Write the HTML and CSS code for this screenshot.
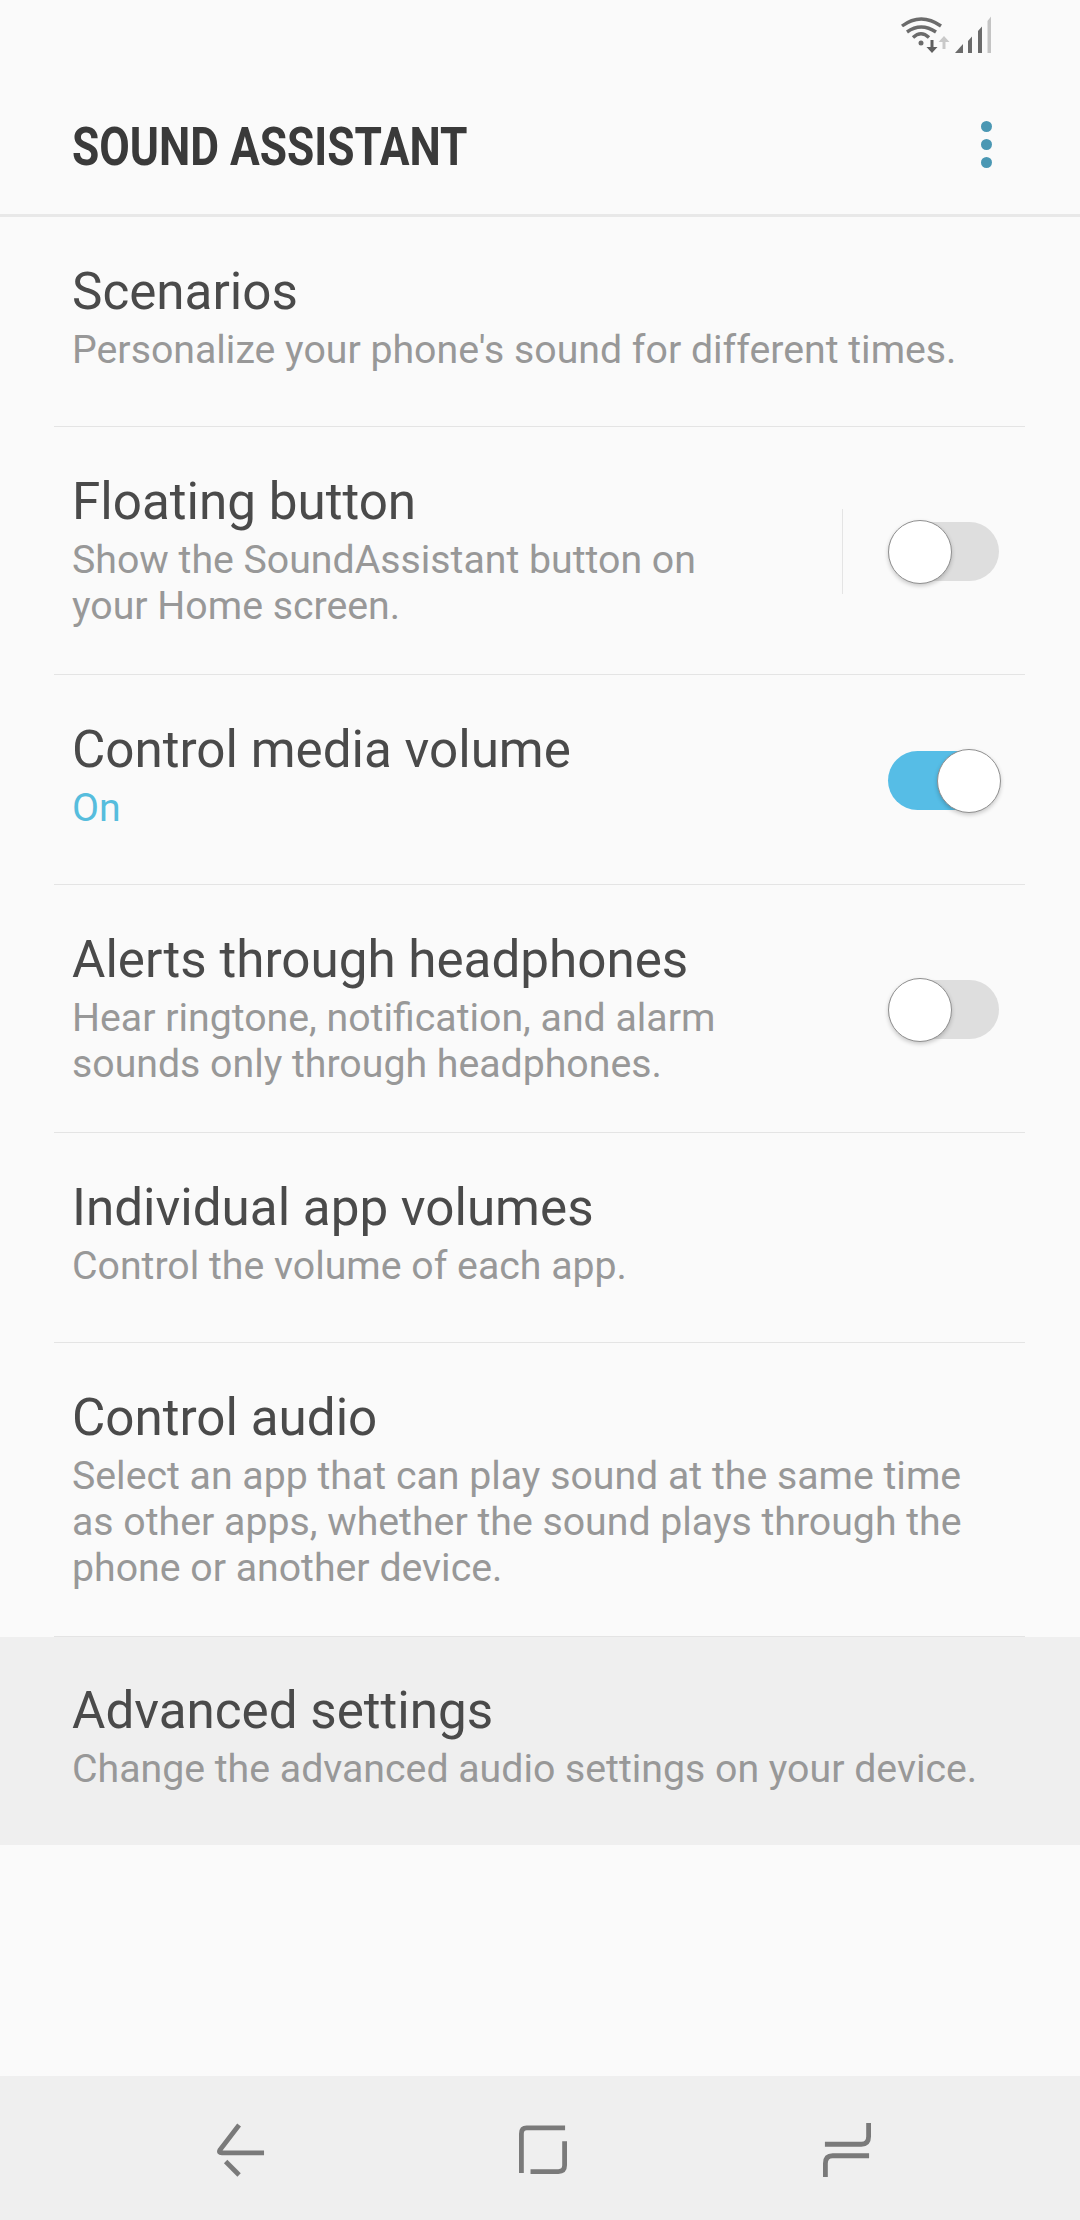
FILE: index.html
```html
<!DOCTYPE html>
<html lang="en">
<head>
<meta charset="utf-8">
<title>Sound Assistant</title>
<link rel="stylesheet" href="styles.css">
</head>
<body>
<div class="screen">
  <div class="status">
    <svg class="status-icon" width="92" height="38" viewBox="0 0 92 38">
      <g fill="none" stroke="#6b6b6b" stroke-width="3.4">
        <path d="M2 10Q21-4 41 10"/>
        <path d="M7 16Q21 6 36 16"/>
        <path d="M13 21.500Q21 14 29 21.500"/>
      </g>
      <circle cx="21" cy="27" r="2.500" fill="#6b6b6b"/>
      <path d="M30.500 24h3v7h4l-5.500 6-5.500-6h4z" fill="#5f5f5f"/>
      <path d="M44 20l5.500 6h-4v7h-3v-7h-4z" fill="#c9c9c9"/>
      <path d="M55 37l8-9v9z" fill="#6b6b6b"/>
      <path d="M68 37V25l4-4.500V37zM78 37V15l4-4.500V37z" fill="#6b6b6b"/>
      <path d="M87.500 37V5l3.500-4.500V37z" fill="#c4c4c4"/>
    </svg>
  </div>
  <header class="appbar">
    <h1 class="appbar-title"><span class="condensed">SOUND ASSISTANT</span></h1>
    <div class="more" aria-label="More options"><i></i><i></i><i></i></div>
  </header>
  <main class="list">
    <section class="row r1">
      <div class="texts"><div class="t">Scenarios</div><div class="s">Personalize your phone's sound for different times.</div></div>
    </section>
    <section class="row r2 has-toggle">
      <div class="texts"><div class="t">Floating button</div><div class="s">Show the SoundAssistant button on<br>your Home screen.</div></div>
      <span class="vline"></span>
      <span class="toggle"><span class="knob"></span></span>
    </section>
    <section class="row r1 has-toggle">
      <div class="texts"><div class="t">Control media volume</div><div class="s on-text">On</div></div>
      <span class="toggle on"><span class="knob"></span></span>
    </section>
    <section class="row r2 has-toggle">
      <div class="texts"><div class="t">Alerts through headphones</div><div class="s">Hear ringtone, notification, and alarm<br>sounds only through headphones.</div></div>
      <span class="toggle"><span class="knob"></span></span>
    </section>
    <section class="row r1">
      <div class="texts"><div class="t">Individual app volumes</div><div class="s">Control the volume of each app.</div></div>
    </section>
    <section class="row r3">
      <div class="texts"><div class="t">Control audio</div><div class="s">Select an app that can play sound at the same time<br>as other apps, whether the sound plays through the<br>phone or another device.</div></div>
    </section>
    <section class="row r1 pressed">
      <div class="texts"><div class="t">Advanced settings</div><div class="s">Change the advanced audio settings on your device.</div></div>
    </section>
  </main>
  <nav class="navbar">
    <svg class="nav-icon" width="48" height="56" viewBox="0 0 50 56" fill="none" stroke="#7a7a7a" stroke-width="5">
      <path d="M23 2L3 28Q1.500 31 5 31H49"/>
      <path d="M9 40L23 54"/>
    </svg>
    <svg class="nav-icon" width="48" height="52" viewBox="0 0 50 52" fill="none" stroke="#7a7a7a" stroke-width="5">
      <path d="M2.500 50V9Q2.500 3 8 3H48"/>
      <path d="M47.500 17V42Q47.500 48.500 41 48.500H12"/>
    </svg>
    <svg class="nav-icon" width="48" height="56" viewBox="0 0 50 56" fill="none" stroke="#7a7a7a" stroke-width="5">
      <path d="M47.500 0V14Q47.500 22 40 22H2"/>
      <path d="M48 34H10Q2.500 34 2.500 42V56"/>
    </svg>
  </nav>
</div>
</body>
</html>
```
FILE: styles.css
```css
* { box-sizing: border-box; margin: 0; padding: 0; }
html, body { width: 1080px; height: 2220px; overflow: hidden; }
body { background: #fafafa; font-family: Roboto, "Liberation Sans", sans-serif; }
.screen { width: 1080px; height: 2220px; display: flex; flex-direction: column; background: #fafafa; }
.status { height: 64px; display: flex; justify-content: flex-end; padding: 16px 88px 0 0; }
.appbar { height: 153px; display: flex; align-items: center; justify-content: space-between; padding: 0 88px 0 72px; border-bottom: 3px solid #e8e8e8; }
.appbar-title { font-size: 54px; font-weight: 700; color: #3a3a3a; line-height: 1; padding-top: 15px; }
.condensed { display: inline-block; transform: scaleX(0.82); transform-origin: left center; white-space: nowrap; }
.more { display: flex; flex-direction: column; gap: 7px; margin-top: 10px; }
.more i { display: block; width: 11px; height: 11px; border-radius: 50%; background: #4a97b3; }
.list { flex: 1; display: flex; flex-direction: column; }
.row { position: relative; display: flex; align-items: center; padding: 0 72px; }
.row::before { content: ""; position: absolute; left: 54px; right: 55px; bottom: 0; height: 1px; background: #e4e4e4; }
.r1 { height: 210px; }
.r2 { height: 248px; }
.r3 { height: 294px; }
.r1 .texts { margin-top: -8px; }
.texts { flex: 1; }
.t { font-size: 51.2px; line-height: 56px; color: #4a4a4a; }
.s { font-size: 39.25px; line-height: 46px; color: #989898; margin-top: 7px; }
.on-text { color: #56bddd; }
.pressed { background: #efefef; height: 208px; }
.pressed::before { display: none; }
.vline { width: 1px; height: 85px; background: #e4e4e4; margin-right: 45px; }
.toggle { position: relative; display: block; width: 111px; height: 59px; border-radius: 30px; background: #dedede; margin-right: 9px; }
.toggle.on { background: #56bde6; }
.knob { position: absolute; left: 0; top: -2px; width: 64px; height: 64px; border-radius: 50%; background: #fff; border: 1px solid #909090; box-shadow: 0 2px 4px rgba(0,0,0,.2); }
.on .knob { left: 49px; }
.navbar { height: 144px; background: #efefef; display: flex; align-items: center; padding: 4px 0 0 217px; gap: 254px; }
.nav-icon:last-child { margin-left: 2px; }
```
